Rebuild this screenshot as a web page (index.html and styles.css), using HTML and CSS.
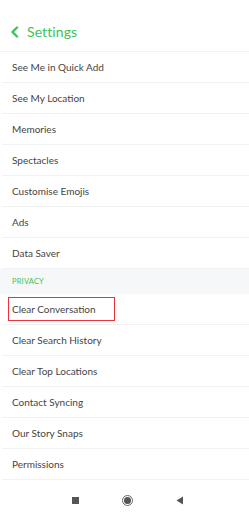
FILE: index.html
```html
<!DOCTYPE html>
<html>
<head>
<meta charset="utf-8">
<link rel="stylesheet" href="styles.css">
</head>
<body>
<div class="screen">
  <header class="header">
    <svg class="back" width="9" height="12" viewBox="0 0 9 12"><path d="M7 1.5 L2.5 6 L7 10.5" fill="none" stroke="#3cc257" stroke-width="2.4" stroke-linecap="round" stroke-linejoin="round"/></svg>
    <span class="title">Settings</span>
  </header>
  <ul class="list">
    <li class="row">See Me in Quick Add</li>
    <li class="row">See My Location</li>
    <li class="row">Memories</li>
    <li class="row">Spectacles</li>
    <li class="row">Customise Emojis</li>
    <li class="row">Ads</li>
    <li class="row">Data Saver</li>
    <li class="section">PRIVACY</li>
    <li class="row"><span class="highlight">Clear Conversation</span></li>
    <li class="row">Clear Search History</li>
    <li class="row">Clear Top Locations</li>
    <li class="row">Contact Syncing</li>
    <li class="row">Our Story Snaps</li>
    <li class="row">Permissions</li>
  </ul>
  <nav class="navbar">
    <span class="nav-square"></span>
    <span class="nav-circle"><span class="nav-dot"></span></span>
    <svg class="nav-back" width="8" height="9" viewBox="0 0 8 9"><path d="M7 0.5 L7 8.5 L0.5 4.5 Z" fill="#555"/></svg>
  </nav>
</div>
</body>
</html>
```
FILE: styles.css
```css
* { box-sizing: border-box; }
html, body { margin: 0; padding: 0; background: #fff; }
.screen {
  width: 249px;
  height: 518px;
  display: flex;
  flex-direction: column;
  font-family: Lato, "Open Sans", sans-serif;
  color: #444;
  overflow: hidden;
}
.header {
  height: 52px;
  display: flex;
  align-items: center;
  padding: 12px 0 0 10px;
  gap: 8px;
  border-bottom: 1px solid #f2f2f2;
}
.title {
  color: #3cc257;
  font-size: 14px;
  font-weight: 400;
  letter-spacing: 0.1px;
}
.list {
  list-style: none;
  margin: 0;
  padding: 0;
}
.row {
  height: 31px;
  display: flex;
  align-items: center;
  padding-left: 10px;
  font-size: 10px;
  border-bottom: 1px solid #f2f2f2;
  margin-left: 2px;
}
.section {
  height: 25px;
  display: flex;
  align-items: center;
  padding-left: 12px;
  background: #f6f7f8;
  color: #3cc257;
  font-size: 7.5px;
  letter-spacing: 0.2px;
}
.highlight {
  display: flex;
  align-items: center;
  height: 24px;
  margin-left: -4px;
  padding: 0 3px;
  width: 107px;
  border: 1.5px solid #e8333a;
}
.navbar {
  flex: 1;
  display: flex;
  align-items: center;
  justify-content: center;
  gap: 43px;
  padding-top: 2px;
  padding-left: 6px;
}
.nav-square {
  width: 7px;
  height: 7px;
  background: #555;
}
.nav-circle {
  width: 11px;
  height: 11px;
  border-radius: 50%;
  border: 1px solid #666;
  display: flex;
  align-items: center;
  justify-content: center;
}
.nav-dot {
  width: 7px;
  height: 7px;
  border-radius: 50%;
  background: #555;
}
```
